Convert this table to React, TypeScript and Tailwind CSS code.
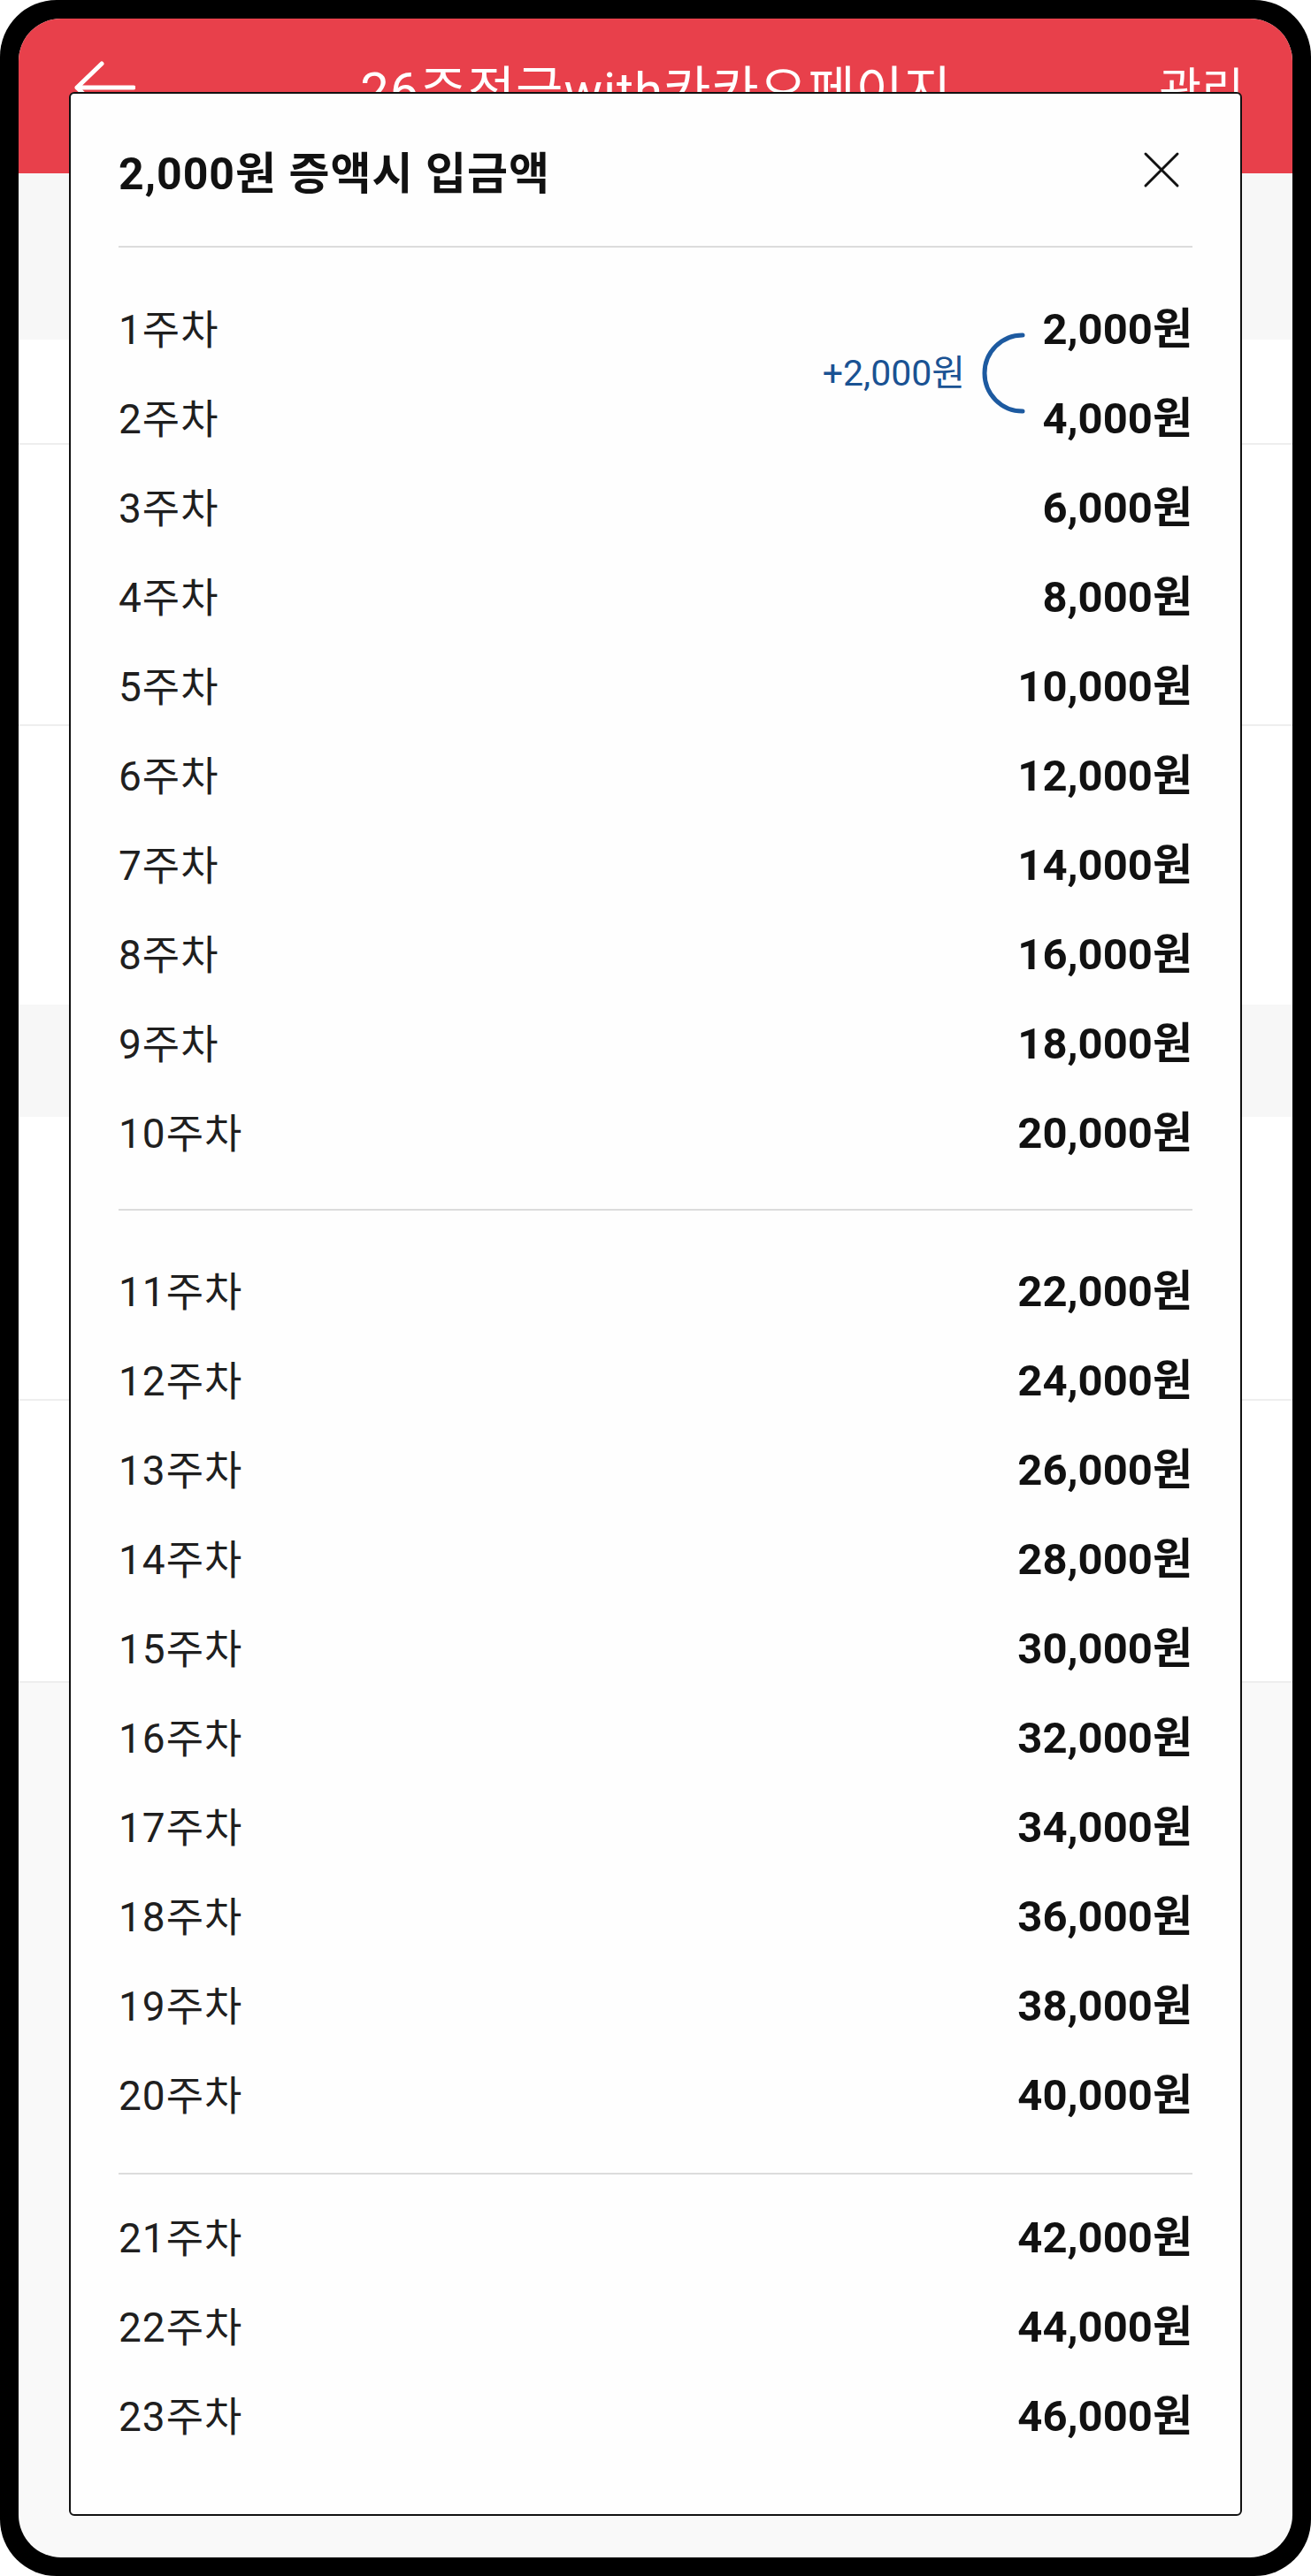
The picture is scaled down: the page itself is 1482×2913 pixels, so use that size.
const weeks = Array.from({ length: 23 }, (_, i) => ({
  week: i + 1,
  amount: ((i + 1) * 2000).toLocaleString("en-US"),
}));

function Row({ week, amount }: { week: number; amount: string }) {
  return (
    <div className="flex h-[101px] items-center justify-between">
      <span className="text-[46px] leading-none tracking-[1px] text-[#1f1f1f]">{week}주차</span>
      <span className="text-[49px] font-bold leading-none text-[#111111]">{amount}원</span>
    </div>
  );
}

function Divider() {
  return <div className="h-[2px] bg-[#dcdcdc]" />;
}

export default function App() {
  const font = "font-['Roboto','Noto_Sans_CJK_KR',sans-serif]";

  return (
    <div className={`w-[1482px] h-[2913px] bg-white ${font}`}>
      <div className="h-full w-full rounded-[64px] bg-black p-[21px]">
        <div className="relative h-full w-full overflow-hidden rounded-[48px] bg-[#f9f9f9]">
          {/* page behind the sheet */}
          <div className="flex h-[175px] items-center justify-between bg-[#e8404b] px-[55px] pb-[12px] text-white">
            <svg width="72" height="62" viewBox="0 0 72 62" className="ml-[5px] mb-[7px]">
              <path d="M34 4 L6 31 L34 58 M6 31 L70 31" fill="none" stroke="white" strokeWidth="5" strokeLinecap="round" strokeLinejoin="round" />
            </svg>
            <span className="ml-[20px] text-[58px] leading-none tracking-[1px]">26주적금with카카오페이지</span>
            <span className="text-[52px] leading-none">관리</span>
          </div>
          <div className="h-[188px] bg-[#f7f7f7]" />
          <div className="h-[117px] bg-white" />
          <div className="h-[2px] bg-[#eeeeee]" />
          <div className="h-[316px] bg-white" />
          <div className="h-[2px] bg-[#eeeeee]" />
          <div className="h-[315px] bg-white" />
          <div className="h-[127px] bg-[#f7f7f7]" />
          <div className="h-[319px] bg-white" />
          <div className="h-[2px] bg-[#eeeeee]" />
          <div className="h-[317px] bg-white" />
          <div className="h-[2px] bg-[#eeeeee]" />

          {/* sheet */}
          <div className="absolute left-[57px] top-[83px] h-[2741px] w-[1326px] rounded-[6px] border-2 border-[#111111] bg-[#fefefe] px-[54px]">
            <div className="flex h-[172px] items-center justify-between pt-[10px]">
              <h2 className="text-[50px] font-bold leading-none tracking-[1px] text-[#111111]">2,000원 증액시 입금액</h2>
              <svg width="42" height="42" viewBox="0 0 42 42" className="mb-[10px] mr-[14px]">
                <path d="M3 3 L39 39 M39 3 L3 39" stroke="#111111" strokeWidth="3" strokeLinecap="round" />
              </svg>
            </div>
            <Divider />

            <div className="relative pt-[42px] pb-[35px]">
              {weeks.slice(0, 10).map((w) => (
                <Row key={w.week} {...w} />
              ))}
              <div className="absolute right-[189px] top-[96px] flex items-center gap-[18px]">
                <span className="text-[41px] leading-none text-[#1a5293]">+2,000원</span>
                <svg width="50" height="92" viewBox="0 0 50 92">
                  <path d="M47 3 A 43 43 0 0 0 47 89" fill="none" stroke="#1d5aa0" strokeWidth="5" strokeLinecap="round" />
                </svg>
              </div>
            </div>
            <Divider />

            <div className="pt-[41px] pb-[37px]">
              {weeks.slice(10, 20).map((w) => (
                <Row key={w.week} {...w} />
              ))}
            </div>
            <Divider />

            <div className="pt-[21px]">
              {weeks.slice(20).map((w) => (
                <Row key={w.week} {...w} />
              ))}
            </div>
          </div>
        </div>
      </div>
    </div>
  );
}
